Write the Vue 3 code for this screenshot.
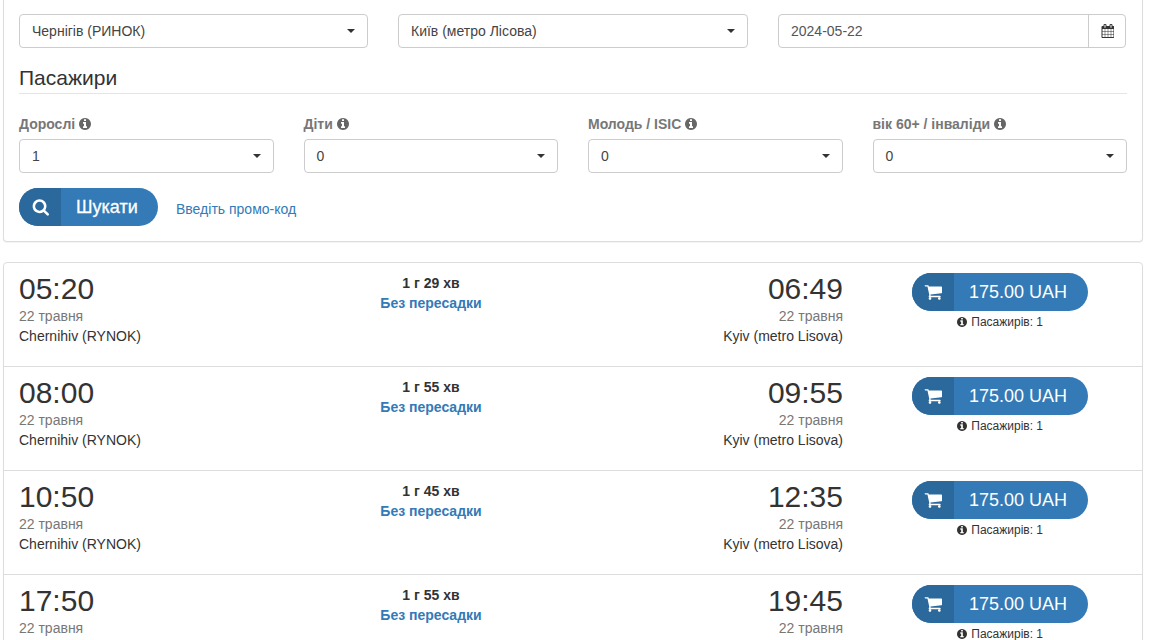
<script setup>
const info = 'M1152 1376v-160q0-14-9-23t-23-9h-96v-512q0-14-9-23t-23-9h-320q-14 0-23 9t-9 23v160q0 14 9 23t23 9h96v320h-96q-14 0-23 9t-9 23v160q0 14 9 23t23 9h448q14 0 23-9t9-23zm-128-896v-160q0-14-9-23t-23-9h-192q-14 0-23 9t-9 23v160q0 14 9 23t23 9h192q14 0 23-9t9-23zm640 416q0 209-103 385.5t-279.5 279.5-385.5 103-385.5-103-279.5-279.5-103-385.5 103-385.5 279.5-279.5 385.5-103 385.5 103 279.5 279.5 103 385.5z'
const search = 'M1216 832q0-185-131.5-316.5t-316.5-131.5-316.5 131.5-131.5 316.5 131.5 316.5 316.5 131.5 316.5-131.5 131.5-316.5zm512 832q0 52-38 90t-90 38q-54 0-90-38l-343-342q-179 124-399 124-143 0-273.5-55.5t-225-150-150-225-55.5-273.5 55.5-273.5 150-225 225-150 273.5-55.5 273.5 55.5 225 150 150 225 55.5 273.5q0 220-124 399l343 343q37 37 37 90z'
const cart = 'M704 1536q0 52-38 90t-90 38-90-38-38-90 38-90 90-38 90 38 38 90zm896 0q0 52-38 90t-90 38-90-38-38-90 38-90 90-38 90 38 38 90zm128-1088v512q0 24-16.5 42.5t-40.5 21.5l-1044 122q13 60 13 70 0 16-24 64h920q26 0 45 19t19 45-19 45-45 19h-1024q-26 0-45-19t-19-45q0-11 8-31.5t16-36 21.5-40 15.5-29.5l-177-823h-204q-26 0-45-19t-19-45 19-45 45-19h256q16 0 28.5 6.5t19.5 15.5 13 24.5 8 26 5.5 29.5 4.5 26h1201q26 0 45 19t19 45z'
const calendar = 'M192 1664h288v-288h-288v288zm352 0h320v-288h-320v288zm-352-352h288v-320h-288v320zm352 0h320v-320h-320v320zm-352-384h288v-288h-288v288zm736 736h320v-288h-320v288zm-384-736h320v-288h-320v288zm768 736h288v-288h-288v288zm-384-352h320v-320h-320v320zm-352-864v-288q0-13-9.5-22.5t-22.5-9.5h-64q-13 0-22.5 9.5t-9.5 22.5v288q0 13 9.5 22.5t22.5 9.5h64q13 0 22.5-9.5t9.5-22.5zm736 864h288v-320h-288v320zm-384-384h320v-288h-320v288zm384 0h288v-288h-288v288zm32-480v-288q0-13-9.5-22.5t-22.5-9.5h-64q-13 0-22.5 9.5t-9.5 22.5v288q0 13 9.5 22.5t22.5 9.5h64q13 0 22.5-9.5t9.5-22.5zm384-64v1280q0 52-38 90t-90 38h-1408q-52 0-90-38t-38-90v-1280q0-52 38-90t90-38h128v-96q0-66 47-113t113-47h64q66 0 113 47t47 113v96h384v-96q0-66 47-113t113-47h64q66 0 113 47t47 113v96h128q52 0 90 38t38 90z'

const passengers = [
  { label: 'Дорослі', value: '1' },
  { label: 'Діти', value: '0' },
  { label: 'Молодь / ISIC', value: '0' },
  { label: 'вік 60+ / інваліди', value: '0' },
]
const trips = [
  { dep: '05:20', arr: '06:49', dur: '1 г 29 хв' },
  { dep: '08:00', arr: '09:55', dur: '1 г 55 хв' },
  { dep: '10:50', arr: '12:35', dur: '1 г 45 хв' },
  { dep: '17:50', arr: '19:45', dur: '1 г 55 хв' },
]
</script>

<template>
  <div class="page">
    <section class="panel search">
      <div class="route">
        <div class="select"><span>Чернігів (РИНОК)</span><i class="caret"></i></div>
        <div class="select"><span>Київ (метро Лісова)</span><i class="caret"></i></div>
        <div class="date">
          <span class="date-value">2024-05-22</span>
          <span class="date-addon">
            <svg class="ico-cal" viewBox="0 0 1664 1792"><path :d="calendar" /></svg>
          </span>
        </div>
      </div>

      <h4 class="legend">Пасажири</h4>

      <div class="passengers">
        <div v-for="p in passengers" :key="p.label" class="field">
          <label class="label">
            {{ p.label }}
            <svg class="ico-info" viewBox="128 128 1536 1536"><path :d="info" /></svg>
          </label>
          <div class="select"><span>{{ p.value }}</span><i class="caret"></i></div>
        </div>
      </div>

      <div class="actions">
        <button class="pill pill-search" type="button">
          <span class="pill-icon">
            <svg class="ico-search" viewBox="0 128 1728 1664"><path :d="search" /></svg>
          </span>
          <span class="pill-text">Шукати</span>
        </button>
        <a class="promo" href="#">Введіть промо-код</a>
      </div>
    </section>

    <section class="panel results">
      <article v-for="t in trips" :key="t.dep" class="trip">
        <div class="times">
          <div class="stop">
            <div class="time">{{ t.dep }}</div>
            <div class="day">22 травня</div>
            <div class="place">Chernihiv (RYNOK)</div>
          </div>
          <div class="middle">
            <div class="dur">{{ t.dur }}</div>
            <a class="direct" href="#">Без пересадки</a>
          </div>
          <div class="stop end">
            <div class="time">{{ t.arr }}</div>
            <div class="day">22 травня</div>
            <div class="place">Kyiv (metro Lisova)</div>
          </div>
        </div>
        <div class="buy">
          <button class="pill pill-buy" type="button">
            <span class="pill-icon">
              <svg class="ico-cart" viewBox="0 256 1728 1408"><path :d="cart" /></svg>
            </span>
            <span class="pill-text">175.00 UAH</span>
          </button>
          <div class="count">
            <svg class="ico-count" viewBox="128 128 1536 1536"><path :d="info" /></svg>
            Пасажирів: 1
          </div>
        </div>
      </article>
    </section>
  </div>
</template>

<style>
html, body { margin: 0; height: 100%; overflow: hidden; background: #fff; }
</style>

<style scoped>
.page {
  width: 1140px;
  margin-left: 3px;
  font-family: "Liberation Sans", Arial, sans-serif;
  font-size: 14px;
  line-height: 20px;
  color: #333;
}
.panel {
  box-sizing: border-box;
  background: #fff;
  border: 1px solid #ddd;
  border-radius: 4px;
  box-shadow: 0 1px 1px rgba(0, 0, 0, .05);
}
.search {
  height: 242px;
  padding: 14px 15px 0;
  border-top: 0;
  border-top-left-radius: 0;
  border-top-right-radius: 0;
  margin-bottom: 20px;
}
.route {
  display: grid;
  grid-template-columns: 349px 350px 348px;
  column-gap: 30px;
}
.select {
  box-sizing: border-box;
  height: 34px;
  display: flex;
  align-items: center;
  justify-content: space-between;
  padding: 0 12px;
  background: #fff;
  border: 1px solid #ccc;
  border-radius: 4px;
  color: #444;
}
.caret {
  width: 0;
  height: 0;
  border-top: 4px solid #333;
  border-left: 4px solid transparent;
  border-right: 4px solid transparent;
}
.date {
  display: flex;
  height: 34px;
  box-sizing: border-box;
  border: 1px solid #ccc;
  border-radius: 4px;
  color: #555;
}
.date-value {
  flex: 1;
  padding: 0 12px;
  line-height: 32px;
}
.date-addon {
  width: 36px;
  border-left: 1px solid #ccc;
  display: flex;
  align-items: center;
  justify-content: center;
}
.ico-cal { width: 13px; height: 14px; fill: #333; }
.legend {
  margin: 20px 0 0;
  padding-bottom: 5px;
  font-size: 21px;
  font-weight: 400;
  line-height: 20px;
  color: #333;
  border-bottom: 1px solid #e5e5e5;
}
.passengers {
  display: grid;
  grid-template-columns: repeat(4, 1fr);
  column-gap: 30px;
  margin-top: 20px;
}
.label {
  display: block;
  height: 25px;
  font-weight: 700;
  color: #777;
}
.ico-info { width: 12px; height: 12px; fill: #666; vertical-align: -1px; }
.actions {
  display: flex;
  align-items: center;
  margin-top: 15px;
}
.pill {
  display: inline-flex;
  align-items: stretch;
  height: 38px;
  padding: 0;
  border: 0;
  border-radius: 19px;
  background: #337ab7;
  color: #fff;
  font: inherit;
  overflow: hidden;
}
.pill-icon {
  width: 42px;
  display: flex;
  align-items: center;
  justify-content: center;
  background: #2b689c;
}
.pill-text {
  flex: 1;
  padding-left: 15px;
  text-align: left;
  font-size: 18px;
  line-height: 38px;
}
.pill-search { width: 139px; }
.pill-search .pill-text { -webkit-text-stroke: .3px #fff; }
.ico-search { width: 17px; height: 17px; fill: #fff; }
.promo {
  margin-left: 18px;
  color: #337ab7;
  text-decoration: none;
  position: relative;
  top: 2px;
}
.results { overflow: hidden; }
.trip {
  box-sizing: border-box;
  height: 104px;
  padding: 0 0 0 15px;
  display: grid;
  grid-template-columns: 824px 1fr;
  border-bottom: 1px solid #ddd;
}
.trip:last-child { border-bottom: 0; }
.times {
  display: grid;
  grid-template-columns: repeat(3, 1fr);
}
.time {
  font-size: 30px;
  line-height: 33px;
  margin-top: 9px;
}
.day { color: #777; line-height: 20px; margin-top: 1px; }
.place { line-height: 20px; }
.end { text-align: right; }
.middle {
  text-align: center;
  padding-top: 10px;
}
.dur { font-weight: 700; line-height: 20px; }
.direct {
  display: block;
  color: #337ab7;
  font-weight: 700;
  text-decoration: none;
  line-height: 20px;
}
.buy {
  padding-left: 15px;
  padding-top: 10px;
  display: flex;
  flex-direction: column;
  align-items: center;
}
.pill-buy { width: 176px; }
.ico-cart { width: 18px; height: 15px; fill: #fff; }
.count {
  font-size: 12px;
  line-height: 17px;
  margin-top: 3px;
}
.ico-count { width: 10px; height: 10px; fill: #333; vertical-align: -1px; margin-right: 1px; }
</style>
